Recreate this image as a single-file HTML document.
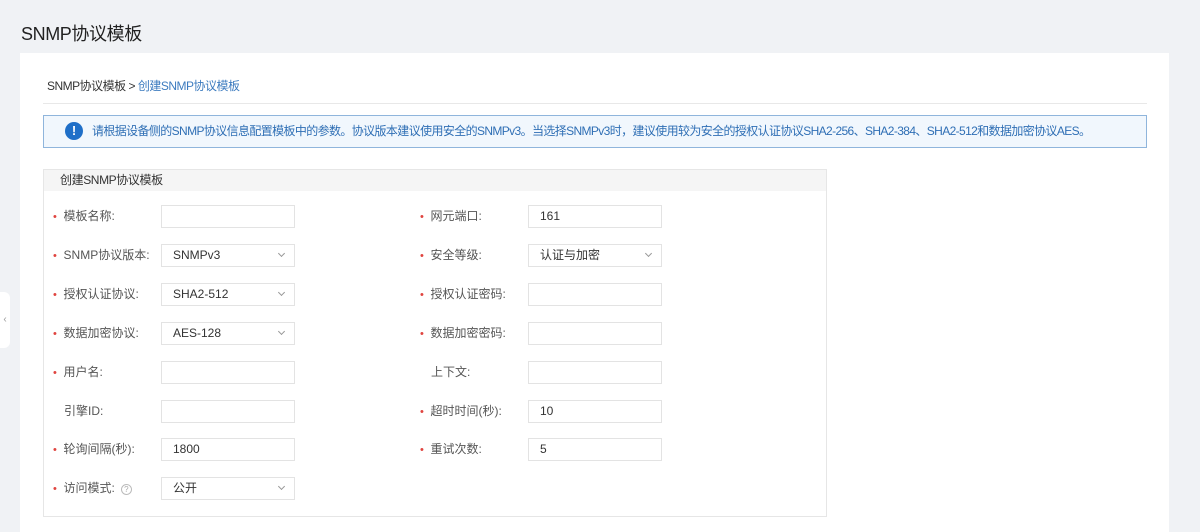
<!DOCTYPE html>
<html><head><meta charset="utf-8"><style>
*{margin:0;padding:0;box-sizing:border-box}
body{width:1200px;height:532px;overflow:hidden;background:#f0f2f5;font-family:"Liberation Sans","Noto Sans CJK SC",sans-serif;color:#333;position:relative}
.abs{position:absolute}
.title{left:21px;top:20px;font-size:18px;letter-spacing:-0.4px;color:#222}
.card{left:20px;top:53px;width:1149px;height:479px;background:#fff}
.bc{left:47px;top:77px;font-size:12px;color:#333;letter-spacing:-0.5px}
.bc span{color:#3c7bbf}
.hr{left:43px;top:103px;width:1104px;height:1px;background:#e8e8e8}
.alert{left:43px;top:115px;width:1104px;height:33px;background:#f1f7fd;border:1px solid #8fb5dc;font-size:12px;letter-spacing:-0.62px;color:#2f6fb5;line-height:31px;padding-left:48px;white-space:nowrap}
.ic{left:65px;top:122px;width:18px;height:18px;border-radius:50%;background:#1f6fc8;color:#fff;font-weight:bold;font-size:13px;text-align:center;line-height:18px}
.panel{left:43px;top:169px;width:784px;height:348px;border:1px solid #e6e6e6}
.ph{left:44px;top:170px;width:782px;height:21px;background:#f5f5f5;font-size:12px;line-height:21px;padding-left:16px;color:#333;letter-spacing:-0.4px}
.lab{font-size:12px;color:#555;line-height:14px}
.star{color:#e0443f;font-size:11px}
.in{width:134px;height:23px;border:1px solid #e3e3e3;font-size:12px;line-height:21px;padding-left:11px;color:#333}
.arr{position:absolute;right:10px;top:6px;width:5px;height:5px;border-right:1px solid #999;border-bottom:1px solid #999;transform:rotate(45deg)}
.tab{left:0;top:292px;width:10px;height:56px;background:#fff;border-radius:0 6px 6px 0;color:#999;font-size:10px;line-height:56px;text-align:center}
.q{display:inline-block;width:11px;height:11px;border:1px solid #bbb;border-radius:50%;font-size:8px;line-height:9px;text-align:center;color:#aaa;margin-left:6px;vertical-align:0}
</style></head><body>
<div class="abs title">SNMP协议模板</div>
<div class="abs card"></div>
<div class="abs tab">&lsaquo;</div>
<div class="abs bc">SNMP协议模板 &gt; <span>创建SNMP协议模板</span></div>
<div class="abs hr"></div>
<div class="abs alert">请根据设备侧的SNMP协议信息配置模板中的参数。协议版本建议使用安全的SNMPv3。当选择SNMPv3时，建议使用较为安全的授权认证协议SHA2-256、SHA2-384、SHA2-512和数据加密协议AES。</div>
<div class="abs ic">!</div>
<div class="abs panel"></div>
<div class="abs ph">创建SNMP协议模板</div>

<div class="abs lab" style="left:53px;top:209px"><span class="star">•</span>&nbsp; 模板名称:</div>
<div class="abs in" style="left:161px;top:205px"></div>
<div class="abs lab" style="left:53px;top:248px"><span class="star">•</span>&nbsp; SNMP协议版本:</div>
<div class="abs in" style="left:161px;top:244px">SNMPv3<i class="arr"></i></div>
<div class="abs lab" style="left:53px;top:287px"><span class="star">•</span>&nbsp; 授权认证协议:</div>
<div class="abs in" style="left:161px;top:283px">SHA2-512<i class="arr"></i></div>
<div class="abs lab" style="left:53px;top:326px"><span class="star">•</span>&nbsp; 数据加密协议:</div>
<div class="abs in" style="left:161px;top:322px">AES-128<i class="arr"></i></div>
<div class="abs lab" style="left:53px;top:365px"><span class="star">•</span>&nbsp; 用户名:</div>
<div class="abs in" style="left:161px;top:361px"></div>
<div class="abs lab" style="left:64px;top:404px">引擎ID:</div>
<div class="abs in" style="left:161px;top:400px"></div>
<div class="abs lab" style="left:53px;top:442px"><span class="star">•</span>&nbsp; 轮询间隔(秒):</div>
<div class="abs in" style="left:161px;top:438px">1800</div>
<div class="abs lab" style="left:53px;top:481px"><span class="star">•</span>&nbsp; 访问模式:<span class="q">?</span></div>
<div class="abs in" style="left:161px;top:477px">公开<i class="arr"></i></div>

<div class="abs lab" style="left:420px;top:209px"><span class="star">•</span>&nbsp; 网元端口:</div>
<div class="abs in" style="left:528px;top:205px">161</div>
<div class="abs lab" style="left:420px;top:248px"><span class="star">•</span>&nbsp; 安全等级:</div>
<div class="abs in" style="left:528px;top:244px">认证与加密<i class="arr"></i></div>
<div class="abs lab" style="left:420px;top:287px"><span class="star">•</span>&nbsp; 授权认证密码:</div>
<div class="abs in" style="left:528px;top:283px"></div>
<div class="abs lab" style="left:420px;top:326px"><span class="star">•</span>&nbsp; 数据加密密码:</div>
<div class="abs in" style="left:528px;top:322px"></div>
<div class="abs lab" style="left:431px;top:365px">上下文:</div>
<div class="abs in" style="left:528px;top:361px"></div>
<div class="abs lab" style="left:420px;top:404px"><span class="star">•</span>&nbsp; 超时时间(秒):</div>
<div class="abs in" style="left:528px;top:400px">10</div>
<div class="abs lab" style="left:420px;top:442px"><span class="star">•</span>&nbsp; 重试次数:</div>
<div class="abs in" style="left:528px;top:438px">5</div>
</body></html>
